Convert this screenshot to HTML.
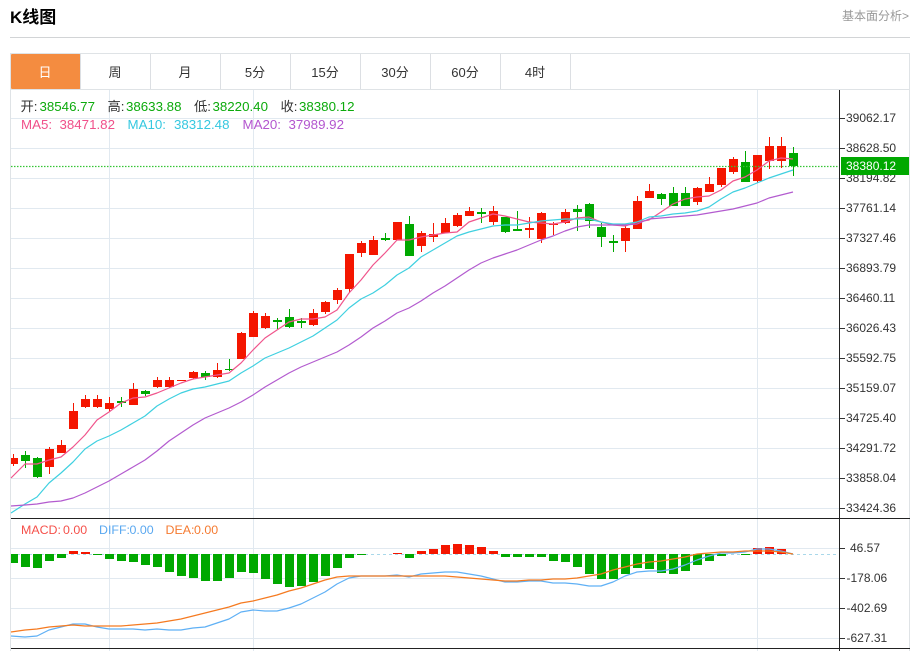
<!DOCTYPE html>
<html><head><meta charset="utf-8"><style>
html,body{margin:0;padding:0;background:#fff;width:918px;height:651px;overflow:hidden}
svg{display:block}
text{font-family:"Liberation Sans","Noto Sans CJK SC",sans-serif}
.ax{font-size:12px;fill:#333}
.tab{font-size:13px;fill:#333;text-anchor:middle}
.lg{font-size:13.3px}
</style></head><body>
<svg width="918" height="651" viewBox="0 0 918 651" xmlns="http://www.w3.org/2000/svg">
<text x="10" y="23" style="font-size:17px;font-weight:bold" fill="#000">K线图</text>
<text x="842" y="20" style="font-size:12px" fill="#999">基本面分析&gt;</text>
<path d="M10 37.5H910" stroke="#d2d4d6" fill="none"/>
<path d="M10.5 53V651M909.5 53V651M10 53.5H910M10 89.5H910" stroke="#dfe3e6" fill="none"/>
<rect x="11" y="54" width="69.5" height="35" rx="1" fill="#f48c40"/>
<path d="M80.5 54V89M150.5 54V89M220.5 54V89M290.5 54V89M360.5 54V89M430.5 54V89M500.5 54V89M570.5 54V89" stroke="#dcdfe3" fill="none"/>
<text x="45" y="77" class="tab" style="fill:#fff">日</text>
<text x="115" y="77" class="tab">周</text>
<text x="185" y="77" class="tab">月</text>
<text x="255" y="77" class="tab">5分</text>
<text x="325" y="77" class="tab">15分</text>
<text x="395" y="77" class="tab">30分</text>
<text x="465" y="77" class="tab">60分</text>
<text x="535" y="77" class="tab">4时</text>

<path d="M11 118.5H839M11 148.5H839M11 178.5H839M11 208.5H839M11 238.5H839M11 268.5H839M11 298.5H839M11 328.5H839M11 358.5H839M11 388.5H839M11 418.5H839M11 448.5H839M11 478.5H839M11 508.5H839M11 548.5H839M11 578.5H839M11 608.5H839M11 638.5H839M109.5 90V651M253.5 90V651M757.5 90V651" stroke="#e1e9f0" fill="none"/>

<g fill="#0caa0c" class="lg" style="font-size:13.3px">
<text x="20.5" y="111" fill="#333">开:</text><text x="39.5" y="111">38546.77</text>
<text x="107.5" y="111" fill="#333">高:</text><text x="126" y="111">38633.88</text>
<text x="194" y="111" fill="#333">低:</text><text x="212.5" y="111">38220.40</text>
<text x="280.5" y="111" fill="#333">收:</text><text x="299" y="111">38380.12</text>
</g>
<g style="font-size:13.3px">
<g fill="#f0508a"><text x="21" y="129">MA5:</text><text x="59.5" y="129">38471.82</text></g>
<g fill="#35c8e0"><text x="127.5" y="129">MA10:</text><text x="174" y="129">38312.48</text></g>
<g fill="#b356cf"><text x="242.5" y="129">MA20:</text><text x="288.5" y="129">37989.92</text></g>
</g>
<g style="font-size:12.4px">
<g fill="#f5504a"><text x="21" y="534">MACD:</text><text x="63" y="534">0.00</text></g>
<g fill="#5aa8f0"><text x="99" y="534">DIFF:</text><text x="129.5" y="534">0.00</text></g>
<g fill="#f57a30"><text x="165.5" y="534">DEA:</text><text x="194" y="534">0.00</text></g>
</g>

<!-- candle wicks -->
<path fill="none" stroke="#f41600" d="M13.5 454V466M49.5 447V474M61.5 440V453M73.5 403V429M85.5 395V408M97.5 395V408M109.5 397V412M133.5 383V405M157.5 377V388M169.5 377V388M193.5 371V379M217.5 363V378M241.5 332V359M253.5 311V337M265.5 313V329M313.5 309V326M325.5 301V314M337.5 288V304M349.5 254V293M361.5 241V257M373.5 236V255M397.5 222V240M421.5 231V252M433.5 223V242M445.5 218V233M457.5 213V227M469.5 207V216M493.5 206V225M529.5 217V238M541.5 212V243M553.5 222V235M565.5 209V224M625.5 225V252M637.5 196V229M649.5 184V198M697.5 187V205M709.5 177V192M721.5 168V187M733.5 157V174M757.5 155V183M769.5 137V169M781.5 137V168"/>
<path fill="none" stroke="#00a800" d="M25.5 451V468M37.5 457V478M121.5 397V407M145.5 390V396M205.5 371V380M229.5 359V371M277.5 318V329M289.5 309V328M301.5 318V328M385.5 233V241M409.5 216V256M481.5 208V223M505.5 217V233M517.5 211V231M577.5 205V231M589.5 203V228M601.5 223V247M613.5 235V252M661.5 193V205M673.5 187V206M685.5 187V206M745.5 151V182M793.5 147V176"/>
<!-- candle bodies -->
<path fill="#f41600" d="M11 458h7v6h-7zM45 449h9v18h-9zM57 445h9v8h-9zM69 411h9v18h-9zM81 399h9v8h-9zM93 399h9v8h-9zM105 403h9v6h-9zM129 389h9v16h-9zM153 380h9v7h-9zM165 380h9v7h-9zM177 380h9v1h-9zM189 372h9v6h-9zM213 370h9v7h-9zM237 333h9v26h-9zM249 313h9v24h-9zM261 316h9v12h-9zM309 313h9v12h-9zM321 302h9v10h-9zM333 290h9v10h-9zM345 254h9v35h-9zM357 243h9v10h-9zM369 240h9v15h-9zM393 222h9v18h-9zM417 233h9v13h-9zM429 234h9v3h-9zM441 223h9v10h-9zM453 215h9v11h-9zM465 211h9v5h-9zM489 211h9v11h-9zM525 228h9v2h-9zM537 213h9v26h-9zM549 224h9v1h-9zM561 212h9v11h-9zM621 228h9v13h-9zM633 201h9v28h-9zM645 191h9v7h-9zM693 188h9v14h-9zM705 184h9v8h-9zM717 168h9v17h-9zM729 159h9v13h-9zM753 155h9v26h-9zM765 146h9v15h-9zM777 146h9v15h-9z"/>
<path fill="#00a800" d="M21 455h9v6h-9zM33 458h9v19h-9zM117 401h9v2h-9zM141 391h9v3h-9zM201 373h9v4h-9zM225 369h9v1h-9zM273 320h9v2h-9zM285 317h9v10h-9zM297 321h9v2h-9zM381 238h9v2h-9zM405 224h9v32h-9zM477 212h9v2h-9zM501 217h9v15h-9zM513 229h9v2h-9zM573 209h9v3h-9zM585 204h9v17h-9zM597 227h9v10h-9zM609 241h9v2h-9zM657 194h9v5h-9zM669 193h9v13h-9zM681 193h9v13h-9zM741 162h9v20h-9zM789 153h9v13h-9z"/>

<!-- current price line -->
<path d="M11 166.5H839" stroke="#35c435" stroke-width="1.2" stroke-dasharray="1.5 1.5" fill="none"/>

<!-- MA lines -->
<g fill="none" stroke-width="1.2" stroke-linejoin="round">
<polyline stroke="#f0558c" points="11,478 25,464 37,464 49,460 61,457 73,447 85,435 97,420 109,412 121,403 133,398 145,397 157,393 169,388 181,383 193,379 205,377 217,375 229,373 241,363 253,350 265,338 277,330 289,322 301,319 313,319 325,317 337,310 349,293 361,280 373,265 385,253 397,240 409,240 421,237 433,235 445,233 457,232 469,222 481,218 493,214 505,216 517,219 529,222 541,223 553,224 565,222 577,218 589,217 601,222 613,225 625,226 637,222 649,220 661,212 673,204 685,199 697,197 709,196 721,190 733,181 745,177 757,170 769,161 781,158 793,159"/>
<polyline stroke="#3fd0e0" points="11,513 25,504 37,497 49,483 61,473 73,462 85,449 97,441 109,436 121,430 133,423 145,416 157,406 169,399 181,393 193,389 205,387 217,384 229,381 241,373 253,366 265,358 277,353 289,348 301,342 313,336 325,328 337,320 349,308 361,299 373,293 385,285 397,275 409,268 421,257 433,250 445,243 457,236 469,232 481,229 493,226 505,225 517,225 529,223 541,221 553,220 565,219 577,219 589,219 601,222 613,224 625,224 637,222 649,217 661,216 673,214 685,213 697,211 709,207 721,199 733,192 745,188 757,183 769,178 781,174 793,170"/>
<polyline stroke="#b35bcf" points="11,506 25,505 37,504 49,502 61,501 73,498 85,493 97,487 109,481 121,474 133,467 145,460 157,451 169,441 181,433 193,425 205,418 217,413 229,408 241,402 253,395 265,387 277,380 289,373 301,367 313,362 325,357 337,352 349,345 361,337 373,328 385,321 397,313 409,308 421,301 433,293 445,286 457,278 469,270 481,263 493,258 505,254 517,250 529,245 541,240 553,236 565,231 577,227 589,225 601,225 613,225 625,225 637,224 649,219 661,218 673,217 685,216 697,215 709,213 721,211 733,209 745,206 757,203 769,198 781,195 793,192"/>
</g>

<!-- MACD zero line -->
<path d="M11 554.5H839" stroke="#a9d8ea" stroke-dasharray="3 3" fill="none"/>
<!-- MACD bars -->
<path fill="#00a800" d="M11 554h7v9h-7zM21 554h9v13h-9zM33 554h9v14h-9zM45 554h9v7h-9zM57 554h9v4h-9zM93 554h9v1h-9zM105 554h9v5h-9zM117 554h9v7h-9zM129 554h9v8h-9zM141 554h9v11h-9zM153 554h9v13h-9zM165 554h9v18h-9zM177 554h9v22h-9zM189 554h9v24h-9zM201 554h9v27h-9zM213 554h9v27h-9zM225 554h9v24h-9zM237 554h9v18h-9zM249 554h9v19h-9zM261 554h9v25h-9zM273 554h9v30h-9zM285 554h9v33h-9zM297 554h9v32h-9zM309 554h9v28h-9zM321 554h9v22h-9zM333 554h9v14h-9zM345 554h9v4h-9zM357 554h9v1h-9zM405 554h9v4h-9zM501 554h9v3h-9zM513 554h9v3h-9zM525 554h9v3h-9zM537 554h9v3h-9zM549 554h9v7h-9zM561 554h9v8h-9zM573 554h9v13h-9zM585 554h9v20h-9zM597 554h9v25h-9zM609 554h9v25h-9zM621 554h9v20h-9zM633 554h9v14h-9zM645 554h9v15h-9zM657 554h9v19h-9zM669 554h9v20h-9zM681 554h9v17h-9zM693 554h9v11h-9zM705 554h9v7h-9zM717 554h9v2h-9zM741 554h9v1h-9z"/>
<path fill="#f41600" d="M69 551h9v3h-9zM81 552h9v2h-9zM393 553h9v1h-9zM417 551h9v3h-9zM429 549h9v5h-9zM441 545h9v9h-9zM453 544h9v10h-9zM465 545h9v9h-9zM477 547h9v7h-9zM489 551h9v3h-9zM753 548h9v6h-9zM765 547h9v7h-9zM777 549h9v5h-9z"/>
<!-- MACD lines -->
<g fill="none" stroke-width="1.2" stroke-linejoin="round">
<polyline stroke="#5fb0f5" points="11,636 25,637 37,636 49,630 61,627 73,624 85,624 97,627 109,629 121,629 133,629 145,630 157,629 169,630 181,630 193,628 205,627 217,623 229,619 241,612 253,610 265,611 277,611 289,608 301,604 313,598 325,592 337,584 349,578 361,576 373,576 385,576 397,575 409,577 421,574 433,573 445,572 457,572 469,574 481,576 493,579 505,582 517,582 529,581 541,581 553,583 565,583 577,584 589,586 601,586 613,582 625,576 637,572 649,571 661,571 673,569 685,565 697,560 709,556 721,553 733,553 745,552 757,549 769,549 781,551 793,554"/>
<polyline stroke="#f57a20" points="11,632 25,630 37,629 49,627 61,626 73,625 85,626 97,626 109,626 121,626 133,625 145,624 157,623 169,621 181,619 193,616 205,613 217,610 229,607 241,603 253,601 265,598 277,595 289,591 301,588 313,584 325,580 337,577 349,576 361,576 373,576 385,576 397,576 409,576 421,576 433,576 445,576 457,577 469,578 481,579 493,580 505,581 517,581 529,580 541,580 553,579 565,579 577,578 589,576 601,574 613,570 625,567 637,564 649,562 661,561 673,559 685,557 697,554 709,553 721,552 733,552 745,551 757,551 769,551 781,552 793,554"/>
</g>

<!-- axes -->
<path d="M839.5 90V651M11 518.5H910M11 648.5H910" stroke="#222" fill="none"/>
<path d="M840 118.5H845M840 148.5H845M840 178.5H845M840 208.5H845M840 238.5H845M840 268.5H845M840 298.5H845M840 328.5H845M840 358.5H845M840 388.5H845M840 418.5H845M840 448.5H845M840 478.5H845M840 508.5H845M840 548.5H845M840 578.5H845M840 608.5H845M840 638.5H845" stroke="#333" fill="none"/>
<g class="ax">
<text class="ax" x="846" y="122">39062.17</text>
<text class="ax" x="846" y="152">38628.50</text>
<text class="ax" x="846" y="182">38194.82</text>
<text class="ax" x="846" y="212">37761.14</text>
<text class="ax" x="846" y="242">37327.46</text>
<text class="ax" x="846" y="272">36893.79</text>
<text class="ax" x="846" y="302">36460.11</text>
<text class="ax" x="846" y="332">36026.43</text>
<text class="ax" x="846" y="362">35592.75</text>
<text class="ax" x="846" y="392">35159.07</text>
<text class="ax" x="846" y="422">34725.40</text>
<text class="ax" x="846" y="452">34291.72</text>
<text class="ax" x="846" y="482">33858.04</text>
<text class="ax" x="846" y="512">33424.36</text>
<text class="ax" x="850" y="552">46.57</text>
<text class="ax" x="846.5" y="582">-178.06</text>
<text class="ax" x="846.5" y="612">-402.69</text>
<text class="ax" x="846.5" y="642">-627.31</text>
</g>
<rect x="841" y="157" width="68" height="18" fill="#00a800"/>
<text x="846" y="170" style="font-size:12px" fill="#fff">38380.12</text>
</svg>
</body></html>
